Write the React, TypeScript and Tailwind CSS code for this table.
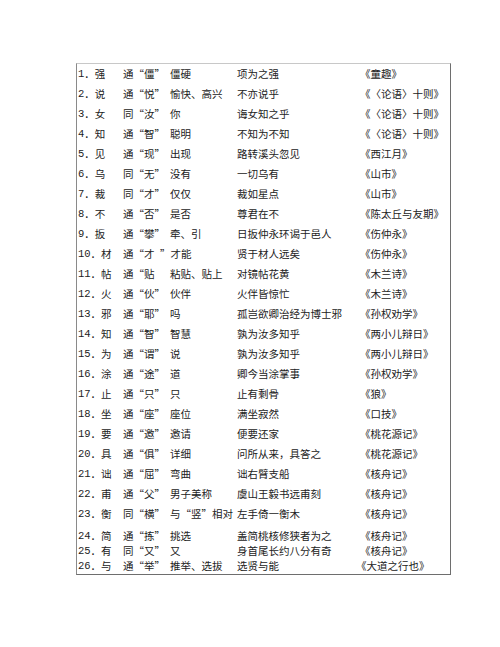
import React from "react";

type Row = [string, string, string, string, string, string];

const rows: Row[] = [
  ["1", "强", "通“僵”", "僵硬", "项为之强", "《童趣》"],
  ["2", "说", "通“悦”", "愉快、高兴", "不亦说乎", "《〈论语〉十则》"],
  ["3", "女", "同“汝”", "你", "诲女知之乎", "《〈论语〉十则》"],
  ["4", "知", "通“智”", "聪明", "不知为不知", "《〈论语〉十则》"],
  ["5", "见", "通“现”", "出现", "路转溪头忽见", "《西江月》"],
  ["6", "乌", "同“无”", "没有", "一切乌有", "《山市》"],
  ["7", "裁", "同“才”", "仅仅", "裁如星点", "《山市》"],
  ["8", "不", "通“否”", "是否", "尊君在不", "《陈太丘与友期》"],
  ["9", "扳", "通“攀”", "牵、引", "日扳仲永环谒于邑人", "《伤仲永》"],
  ["10", "材", "通“才", "”才能", "贤于材人远矣", "《伤仲永》"],
  ["11", "帖", "通“贴", "粘贴、贴上", "对镜帖花黄", "《木兰诗》"],
  ["12", "火", "通“伙”", "伙伴", "火伴皆惊忙", "《木兰诗》"],
  ["13", "邪", "通“耶”", "吗", "孤岂欲卿治经为博士邪", "《孙权劝学》"],
  ["14", "知", "通“智”", "智慧", "孰为汝多知乎", "《两小儿辩日》"],
  ["15", "为", "通“谓”", "说", "孰为汝多知乎", "《两小儿辩日》"],
  ["16", "涂", "通“途”", "道", "卿今当涂掌事", "《孙权劝学》"],
  ["17", "止", "通“只”", "只", "止有剩骨", "《狼》"],
  ["18", "坐", "通“座”", "座位", "满坐寂然", "《口技》"],
  ["19", "要", "通“邀”", "邀请", "便要还家", "《桃花源记》"],
  ["20", "具", "通“俱”", "详细", "问所从来，具答之", "《桃花源记》"],
  ["21", "诎", "通“屈”", "弯曲", "诎右臂支船", "《核舟记》"],
  ["22", "甫", "通“父”", "男子美称", "虞山王毅书远甫刻", "《核舟记》"],
  ["23", "衡", "同“横”", "与“竖”相对", "左手倚一衡木", "《核舟记》"],
  ["24", "简", "通“拣”", "挑选", "盖简桃核修狭者为之", "《核舟记》"],
  ["25", "有", "同“又”", "又", "身首尾长约八分有奇", "《核舟记》"],
  ["26", "与", "通“举”", "推举、选拔", "选贤与能", "《大道之行也》"],
];

const heights: Record<number, string> = {
  23: "h-[16px] mt-[4px]",
  24: "h-[15px]",
  25: "h-[15px]",
};

export default function App() {
  return (
    <div className="w-[500px] h-[647px] bg-white pt-[63px] pl-[76px]">
      <div
        className="w-[375px] border-t border-t-[#c8c8c8] border-l border-l-[#8a8a8a] border-r border-r-[#6e6e6e] border-b border-b-[#6e6e6e] text-[10.5px] text-[#222] leading-none [text-spacing-trim:space-all]"
        style={{ fontFamily: '"Noto Sans CJK SC", sans-serif' }}
      >
        {rows.map((r, i) => {
          const h = heights[i] ?? "h-[20px]";
          return (
            <div key={i} className={`flex items-center whitespace-nowrap ${h}`}>
              <div className="w-[46px] pl-px flex items-center">
                <span style={{ fontFamily: '"Liberation Mono", monospace' }} className="text-[10.5px]">
                  {r[0]}
                </span>
                <span>．</span>
                <span>{r[1]}</span>
              </div>
              <div className="w-[47px]">{r[2]}</div>
              <div className={i === 9 ? "w-[67px] -ml-[10px]" : "w-[67px]"}>{r[3]}</div>
              <div className={i === 9 ? "w-[123px] ml-[10px]" : "w-[123px]"}>{r[4]}</div>
              <div className={i === 25 ? "-ml-[4px]" : ""}>{r[5]}</div>
            </div>
          );
        })}
      </div>
    </div>
  );
}
